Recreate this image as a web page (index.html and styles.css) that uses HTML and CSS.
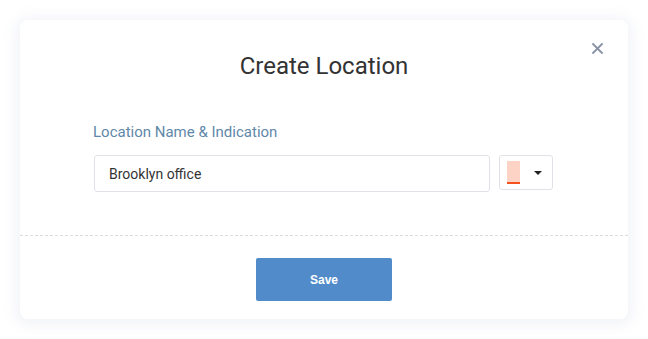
FILE: index.html
```html
<!DOCTYPE html>
<html lang="en">
<head>
    <title>Create Location</title>
    <link rel="stylesheet" href="styles.css">
</head>
<body>
<div class="modal">
    <button class="close" aria-label="Close">
        <svg width="11" height="11" viewBox="0 0 11 11">
            <path d="M1 1L10 10M10 1L1 10" stroke="#8a93a5" stroke-width="1.8" stroke-linecap="round"/>
        </svg>
    </button>
    <div class="modalBody">
        <h2>Create Location</h2>
        <div class="field">
            <label for="locName">Location Name &amp; Indication</label>
            <div class="fieldRow">
                <input type="text" id="locName" value="Brooklyn office">
                <div class="colorPicker">
                    <span class="swatch"></span>
                    <span class="caret"></span>
                </div>
            </div>
        </div>
    </div>
    <div class="modalFooter">
        <button class="saveButton">Save</button>
    </div>
</div>
</body>
</html>
```

FILE: styles.css
```css
body {
    margin: 0;
    padding: 20px;
    background: #ffffff;
    font-family: Roboto, Arial, sans-serif;
}

.modal {
    position: relative;
    width: 608px;
    height: 299px;
    box-sizing: border-box;
    background: #ffffff;
    border-radius: 8px;
    box-shadow: 0 2px 14px 4px rgba(150, 155, 200, 0.12);
    display: flex;
    flex-direction: column;
}

.close {
    position: absolute;
    top: 22px;
    right: 25px;
    border: none;
    background: none;
    padding: 0;
    cursor: pointer;
}

.modalBody {
    height: 216px;
    box-sizing: border-box;
    padding: 0 74px;
    border-bottom: 1px dashed #dcdcdc;
}

h2 {
    margin: 32px 0 0;
    text-align: center;
    font-size: 24px;
    font-weight: 400;
    line-height: 28px;
    color: #333333;
}

.field {
    margin-top: 43px;
    display: flex;
    flex-direction: column;
    gap: 14px;
}

label {
    font-size: 15px;
    line-height: 18px;
    color: #5f88a9;
    margin-left: -1px;
}

.fieldRow {
    display: flex;
    gap: 9px;
    align-items: flex-start;
}

input[type="text"] {
    width: 396px;
    height: 37px;
    box-sizing: border-box;
    padding: 0 14px;
    border: 1px solid #dfe2e6;
    border-radius: 3px;
    font-family: Roboto, Arial, sans-serif;
    font-size: 14px;
    color: #333333;
    outline: none;
}

.colorPicker {
    width: 54px;
    height: 35px;
    box-sizing: border-box;
    border: 1px solid #dfe2e6;
    border-radius: 3px;
    display: flex;
    align-items: center;
    padding-left: 7px;
    gap: 14px;
}

.swatch {
    width: 13px;
    height: 23px;
    box-sizing: border-box;
    background: #fdd3c5;
    border-bottom: 2px solid #f4511e;
}

.caret {
    width: 0;
    height: 0;
    border-left: 4px solid transparent;
    border-right: 4px solid transparent;
    border-top: 4px solid #222222;
}

.modalFooter {
    display: flex;
    justify-content: center;
    padding-top: 22px;
}

.saveButton {
    width: 136px;
    height: 43px;
    border: none;
    border-radius: 2px;
    background: #528bca;
    color: #ffffff;
    font-family: "Liberation Sans", Arial, sans-serif;
    font-weight: 700;
    font-size: 12px;
    cursor: pointer;
}
```
